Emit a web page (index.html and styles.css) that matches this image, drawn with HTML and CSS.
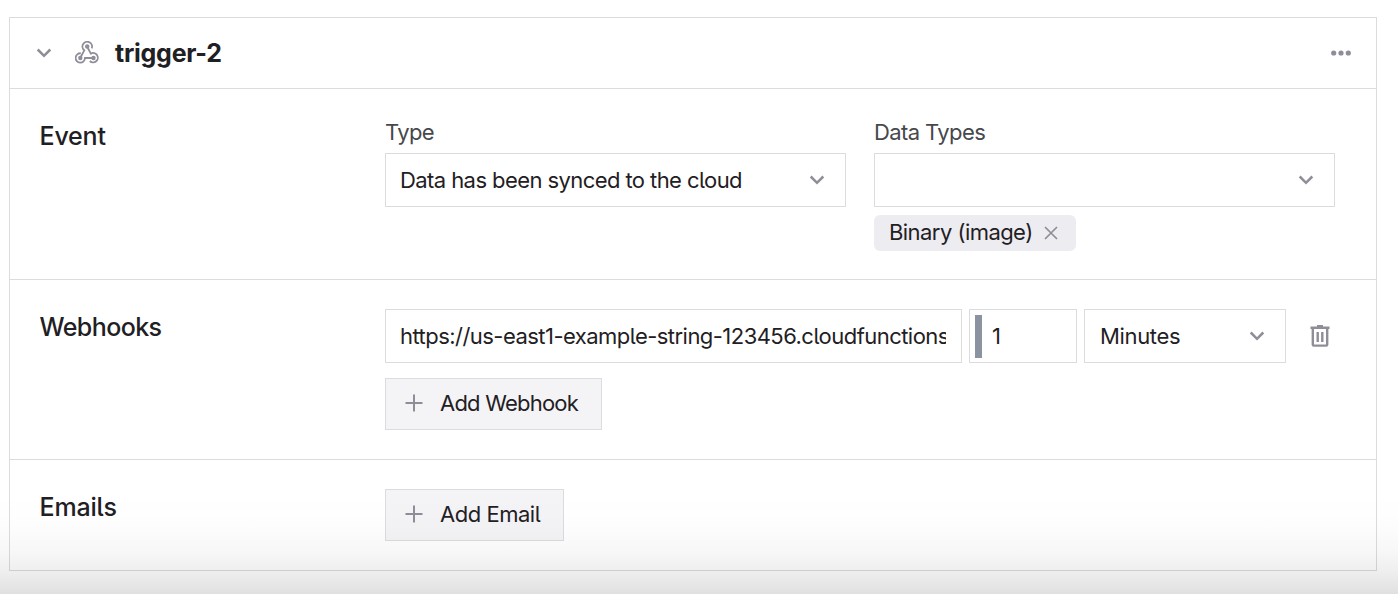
FILE: index.html
```
<!DOCTYPE html>
<html lang="en">
<head>
<meta charset="utf-8">
<title>trigger-2</title>
<link rel="stylesheet" href="styles.css">
</head>
<body>
<main class="card">
  <header class="header">
    <svg class="chevron" viewBox="0 0 16 10"><path d="M1.700 1.500 8 7.800l6.300-6.300"/></svg>
    <svg class="hook" viewBox="0 0 24 23">
      <path d="M16.700 7.300A4.800 4.800 0 1 0 9.300 9.300L6 15.500"/>
      <path d="M12.600 6.500 15.800 12.600A4.700 4.700 0 1 1 14.800 20"/>
      <path d="M17 17H10A4.700 4.700 0 1 1 5.800 12.300"/>
      <circle cx="12.200" cy="5.500" r="2.200"/><circle cx="5.300" cy="17" r="2.200"/><circle cx="18.500" cy="17" r="2.200"/>
    </svg>
    <h1 class="title">trigger-2</h1>
    <svg class="more" viewBox="0 0 20 6"><circle cx="2.700" cy="3" r="2.600"/><circle cx="10" cy="3" r="2.600"/><circle cx="17.300" cy="3" r="2.600"/></svg>
  </header>

  <section class="section event">
    <h2 class="heading">Event</h2>
    <div class="fields">
      <div class="field">
        <label class="label">Type</label>
        <div class="control"><span>Data has been synced to the cloud</span>
          <svg class="chevron" viewBox="0 0 16 10"><path d="M1.700 1.500 8 7.800l6.300-6.300"/></svg></div>
      </div>
      <div class="field">
        <label class="label">Data Types</label>
        <div class="control"><span></span>
          <svg class="chevron" viewBox="0 0 16 10"><path d="M1.700 1.500 8 7.800l6.300-6.300"/></svg></div>
        <div class="chip"><span>Binary (image)</span>
          <svg class="close" viewBox="0 0 14 14"><path d="M1 1l12 12M13 1 1 13"/></svg></div>
      </div>
    </div>
  </section>

  <section class="section webhooks">
    <h2 class="heading tight">Webhooks</h2>
    <div class="stack">
      <div class="row">
        <div class="control url"><span class="clip">https://us-east1-example-string-123456.cloudfunctions</span></div>
        <div class="control count"><i class="bar"></i><span>1</span></div>
        <div class="control unit"><span>Minutes</span>
          <svg class="chevron" viewBox="0 0 16 10"><path d="M1.700 1.500 8 7.800l6.300-6.300"/></svg></div>
        <svg class="trash" viewBox="0 0 20 22"><path d="M.5 2.800h19M7 1.300h6M2.800 3v16.300q0 1.300 1.300 1.300h11.800q1.300 0 1.300-1.300V3M7.700 7v10M12.300 7v10"/></svg>
      </div>
      <div class="button add-webhook"><svg class="plus" viewBox="0 0 18 18"><path d="M9 .5v17M.5 9h17"/></svg><span>Add Webhook</span></div>
    </div>
  </section>

  <section class="section emails">
    <h2 class="heading">Emails</h2>
    <div class="stack">
      <div class="button add-email"><svg class="plus" viewBox="0 0 18 18"><path d="M9 .5v17M.5 9h17"/></svg><span>Add Email</span></div>
    </div>
  </section>
</main>
<div class="shade"></div>
</body>
</html>
```
FILE: styles.css
```
* { box-sizing: border-box; }
body {
  margin: 0;
  padding: 17px 21px 23px 9px;
  height: 594px;
  overflow: hidden;
  background: #fff;
  color: #1f2023;
  font: 430 22px/28px Inter, "Liberation Sans", sans-serif;
  font-feature-settings: "cv05";
  letter-spacing: -0.58px;
}
svg { display: block; flex: none; fill: none; stroke: #8f8e98; stroke-width: 2; }
.card { border: 1px solid #dcdcde; }
.header {
  display: flex;
  align-items: center;
  height: 71px;
  padding: 0 25px 1px 26px;
  border-bottom: 1px solid #dcdcde;
}
.chevron { width: 16px; height: 10px; stroke-width: 2.5; }
.hook { width: 24px; height: 23px; margin-left: 23px; stroke-width: 1.8; }
.hook circle { fill: #8f8e98; stroke: none; }
.title { flex: 1; margin: 1px 0 0 16px; font-size: 25px; font-weight: 650; letter-spacing: -0.25px; }
.more { width: 20px; height: 6px; }
.more circle { fill: #8f8e98; stroke: none; }
.section {
  display: grid;
  grid-template-columns: 345.5px 950px;
  padding: 29px 0 0 29.5px;
  border-bottom: 1px solid #dcdcde;
}
.event { height: 191px; }
.webhooks { height: 180px; }
.emails { height: 110px; border-bottom: 0; }
.heading { margin: 4px 0 0; font-size: 25px; line-height: 28px; font-weight: 520; letter-spacing: -0.2px; }
.tight { letter-spacing: -0.58px; }
.fields { display: grid; grid-template-columns: 461px 461px; gap: 28px; }
.label { display: block; height: 35px; color: #47484c; letter-spacing: -0.6px; }
.control {
  display: flex;
  align-items: center;
  justify-content: space-between;
  height: 54px;
  padding: 0 20px 0 14px;
  border: 1px solid #dcdcde;
  background: #fff;
}
.chip {
  display: flex;
  align-items: center;
  justify-content: space-between;
  width: 202px;
  height: 36px;
  margin-top: 8px;
  padding: 0 18px 2px 15px;
  border-radius: 6px;
  background: #edecf1;
  letter-spacing: -0.55px;
}
.close { width: 14px; height: 14px; margin-top: 2px; stroke-width: 1.7; }
.stack { display: flex; flex-direction: column; align-items: flex-start; gap: 15px; }
.row { display: flex; align-items: center; gap: 7px; }
.url { width: 577px; padding: 0 15px 0 14px; letter-spacing: -0.54px; }
.clip { overflow: hidden; white-space: nowrap; }
.count { width: 108px; justify-content: flex-start; padding-left: 5px; gap: 10px; }
.bar { width: 7px; height: 43px; background: #8b93a1; }
.unit { width: 202px; padding-left: 15px; letter-spacing: -0.35px; }
.trash { width: 20px; height: 22px; margin-left: 17px; stroke-width: 2.4; }
.button {
  display: flex;
  align-items: center;
  gap: 17px;
  height: 52px;
  padding: 0 0 2px 19px;
  border: 1px solid #dcdcde;
  background: #f4f4f7;
}
.plus { width: 18px; height: 18px; }
.add-webhook { width: 217px; letter-spacing: -0.78px; }
.add-email { width: 179px; letter-spacing: -0.48px; }
.shade {
  position: absolute;
  left: 0;
  right: 0;
  top: 494px;
  height: 100px;
  background: linear-gradient(rgba(0,0,0,0), rgba(0,0,0,.008) 30%, rgba(0,0,0,.03) 58%, rgba(0,0,0,.07) 80%, rgba(0,0,0,.12));
}
```
